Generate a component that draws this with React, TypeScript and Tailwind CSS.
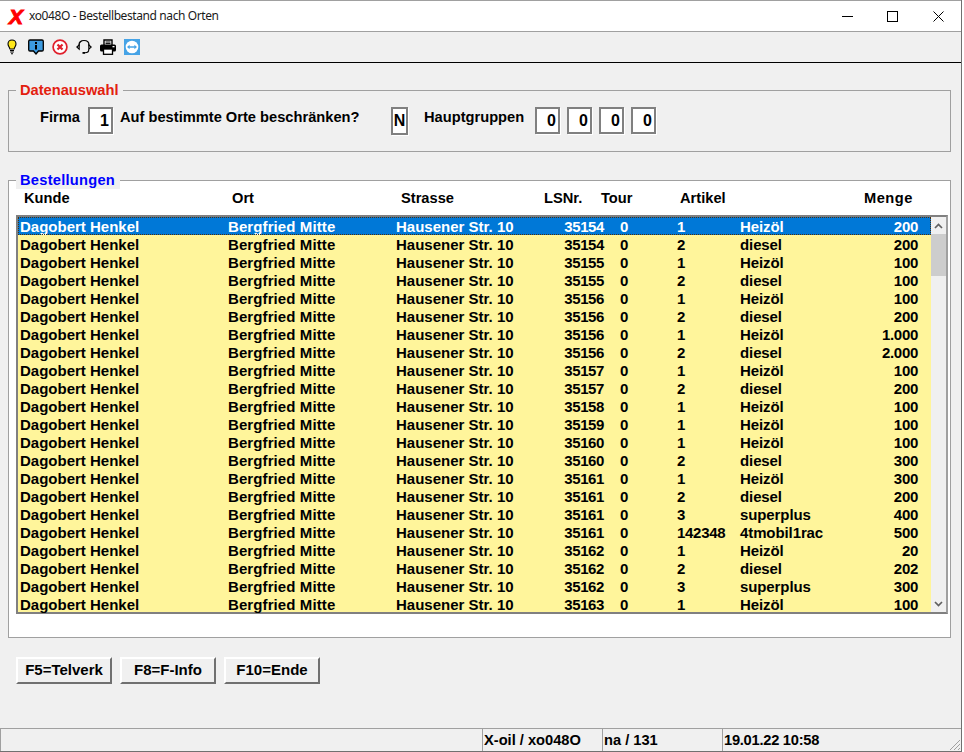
interface OrderRow {
  lsnr: string;
  pos: string;
  artikel: string;
  menge: string;
}

const rows: OrderRow[] = [
  { lsnr: '35154', pos: '1', artikel: 'Heizöl', menge: '200' },
  { lsnr: '35154', pos: '2', artikel: 'diesel', menge: '200' },
  { lsnr: '35155', pos: '1', artikel: 'Heizöl', menge: '100' },
  { lsnr: '35155', pos: '2', artikel: 'diesel', menge: '100' },
  { lsnr: '35156', pos: '1', artikel: 'Heizöl', menge: '100' },
  { lsnr: '35156', pos: '2', artikel: 'diesel', menge: '200' },
  { lsnr: '35156', pos: '1', artikel: 'Heizöl', menge: '1.000' },
  { lsnr: '35156', pos: '2', artikel: 'diesel', menge: '2.000' },
  { lsnr: '35157', pos: '1', artikel: 'Heizöl', menge: '100' },
  { lsnr: '35157', pos: '2', artikel: 'diesel', menge: '200' },
  { lsnr: '35158', pos: '1', artikel: 'Heizöl', menge: '100' },
  { lsnr: '35159', pos: '1', artikel: 'Heizöl', menge: '100' },
  { lsnr: '35160', pos: '1', artikel: 'Heizöl', menge: '100' },
  { lsnr: '35160', pos: '2', artikel: 'diesel', menge: '300' },
  { lsnr: '35161', pos: '1', artikel: 'Heizöl', menge: '300' },
  { lsnr: '35161', pos: '2', artikel: 'diesel', menge: '200' },
  { lsnr: '35161', pos: '3', artikel: 'superplus', menge: '400' },
  { lsnr: '35161', pos: '142348', artikel: '4tmobil1rac', menge: '500' },
  { lsnr: '35162', pos: '1', artikel: 'Heizöl', menge: '20' },
  { lsnr: '35162', pos: '2', artikel: 'diesel', menge: '202' },
  { lsnr: '35162', pos: '3', artikel: 'superplus', menge: '300' },
  { lsnr: '35163', pos: '1', artikel: 'Heizöl', menge: '100' },
];

function Bulb() {
  return (
    <svg width="16" height="16" viewBox="0 0 16 16">
      <path d="M8 1C5.500 1 4 2.900 4 5c0 2 1.500 3 1.900 5h4.200c.4-2 1.900-3 1.900-5 0-2.100-1.500-4-4-4z" fill="#ffe81a" stroke="#000" strokeWidth="1.100" />
      <path d="M6 11.500h4M6.200 13h3.600M7 14.700h2" stroke="#000" strokeWidth="1.100" />
    </svg>
  );
}

function InfoBubble() {
  return (
    <svg width="16" height="16" viewBox="0 0 16 16">
      <path d="M2 1h12a1.300 1.300 0 0 1 1.300 1.300v8.400A1.300 1.300 0 0 1 14 12h-3.500L8 15l-2.500-3H2a1.300 1.300 0 0 1-1.300-1.300V2.300A1.300 1.300 0 0 1 2 1z" fill="#3d9be0" stroke="#000" strokeWidth="1.300" />
      <rect x="7" y="3" width="2" height="2" fill="#000" />
      <rect x="7" y="6" width="2" height="4.500" fill="#000" />
    </svg>
  );
}

function StopCircle() {
  return (
    <svg width="16" height="16" viewBox="0 0 16 16">
      <circle cx="8" cy="8" r="6.900" fill="#fff" stroke="#e0202c" strokeWidth="1.700" />
      <path d="M5.500 5.500l5 5M10.500 5.500l-5 5" stroke="#e0202c" strokeWidth="2.200" />
    </svg>
  );
}

function Headset() {
  return (
    <svg width="16" height="16" viewBox="0 0 16 16" fill="none">
      <path d="M3 7V6C3 3.200 5.200 1.500 8 1.500S13 3.200 13 6v1" stroke="#000" strokeWidth="1.200" />
      <path d="M3.200 5.800L.8 8l2.400 2.200zM12.800 5.800L15.200 8l-2.400 2.200z" fill="#fff" stroke="#000" strokeWidth="1.100" />
      <path d="M12.800 10.500c0 2.300-1.800 3.300-3.800 3.300" stroke="#000" strokeWidth="1.100" />
      <rect x="6.500" y="13" width="2.500" height="1.800" fill="#000" />
    </svg>
  );
}

function Printer() {
  return (
    <svg width="16" height="16" viewBox="0 0 16 16">
      <path d="M4 6V1h8v5" fill="#fff" stroke="#000" strokeWidth="1.400" />
      <path d="M5.500 3h5M5.500 4.600h5" stroke="#000" />
      <rect x="0" y="5.500" width="16" height="7" rx="1.500" fill="#000" />
      <rect x="3.500" y="10" width="9" height="5.300" fill="#fff" stroke="#000" strokeWidth="1.300" />
      <rect x="12.500" y="7" width="2" height="1.300" fill="#fff" />
    </svg>
  );
}

function RemoteLogo() {
  return (
    <svg width="16" height="16" viewBox="0 0 16 16">
      <rect width="16" height="16" fill="#46a3e6" />
      <circle cx="8" cy="8" r="6.300" fill="#fff" />
      <path d="M3 8l2.600-2.300v1.500h4.800V5.700L13 8l-2.600 2.300V8.800H5.600v1.500z" fill="#46a3e6" />
    </svg>
  );
}

function Box({ value, wide = true }: { value: string; wide?: boolean }) {
  return (
    <div
      className={`flex items-center border-2 border-[#808080] bg-white text-[16px] font-bold shadow-[1px_1px_0_#ffffff] ${
        wide ? 'h-[27px] w-[25px] justify-end pr-[2px]' : 'h-[28px] w-[17px] justify-center'
      }`}
    >
      {value}
    </div>
  );
}

function FnButton({ label }: { label: string }) {
  return (
    <button className="flex h-[27px] w-[96px] items-center justify-center border-2 border-t-white border-l-white border-r-[#707070] border-b-[#707070] bg-[#f0f0f0] text-[15px] font-bold text-black">
      {label}
    </button>
  );
}

export default function App() {
  return (
    <div className="h-[752px] w-[964px] overflow-hidden bg-white font-['Liberation_Sans',Arial,sans-serif] text-black">
      <div className="flex h-full w-[962px] flex-col border-r border-[#707070] bg-[#f0f0f0]">
        {/* Title bar */}
        <div className="flex h-[32px] shrink-0 items-center border-t border-b border-t-[#a0a0a0] border-b-[#a0a0a0] bg-white">
          <span className="ml-[9px] w-[20px] text-[21px] leading-none font-bold text-[#ff0000] italic [-webkit-text-stroke:1px_#ff0000]">X</span>
          <span className="font-['Noto_Sans',sans-serif] text-[12px] tracking-[-0.4px] text-[#1a1a1a]">xo048O - Bestellbestand nach Orten</span>
          <div className="ml-auto flex items-center">
            <svg className="mr-[34px]" width="11" height="11" viewBox="0 0 11 11" stroke="#000" fill="none">
              <path d="M0 5.500h11" />
            </svg>
            <svg className="mr-[35px]" width="11" height="11" viewBox="0 0 11 11" stroke="#000" fill="none">
              <rect x="0.500" y="0.500" width="10" height="10" />
            </svg>
            <svg className="mr-[17px]" width="11" height="11" viewBox="0 0 11 11" stroke="#000" fill="none">
              <path d="M0.500 0.500l10 10M10.500 0.500l-10 10" />
            </svg>
          </div>
        </div>

        {/* Toolbar */}
        <div className="flex h-[31px] shrink-0 items-center gap-[8px] border-b border-black pl-[4px]">
          <Bulb />
          <InfoBubble />
          <StopCircle />
          <Headset />
          <Printer />
          <RemoteLogo />
        </div>

        <div className="flex flex-1 flex-col px-[8px]">
          {/* Datenauswahl */}
          <fieldset className="mt-[18px] h-[71px] w-[943px] border border-[#a0a0a0]">
            <legend className="ml-[7px] h-[18px] px-[4px] text-[14.67px] leading-[18px] font-bold text-[#e3200f]">Datenauswahl</legend>
            <div className="flex items-start pt-[8px] text-[14.67px] font-bold">
              <span className="mt-[1px] ml-[31px] w-[48px] leading-[18px]">Firma</span>
              <Box value="1" />
              <span className="mt-[1px] ml-[7px] w-[271px] leading-[18px]">Auf bestimmte Orte beschränken?</span>
              <Box value="N" wide={false} />
              <span className="mt-[1px] ml-[16px] w-[111px] leading-[18px]">Hauptgruppen</span>
              <div className="flex gap-[7px]">
                <Box value="0" />
                <Box value="0" />
                <Box value="0" />
                <Box value="0" />
              </div>
            </div>
          </fieldset>

          {/* Bestellungen */}
          <fieldset className="mt-[20px] h-[466px] w-[943px] border border-[#a0a0a0] bg-white">
            <legend className="ml-[7px] h-[17px] bg-[#f0f0f0] pr-[5px] pl-[4px] text-[14.67px] leading-[17px] font-bold tracking-[0.25px] text-[#0000ff]">Bestellungen</legend>
            <div className="flex h-[26px] items-center pb-[9px] text-[14.67px] font-bold">
              <span className="ml-[15px] w-[208px]">Kunde</span>
              <span className="w-[169px]">Ort</span>
              <span className="w-[143px]">Strasse</span>
              <span className="w-[57px]">LSNr.</span>
              <span className="w-[79px]">Tour</span>
              <span className="w-[184px]">Artikel</span>
              <span className="tracking-[0.5px]">Menge</span>
            </div>
            <div className="ml-[7px] flex h-[399px] w-[932px] border-2 border-t-[#808080] border-l-[#808080] border-r-[#a0a0a0] border-b-[#808080]">
              <div className="w-[913px] bg-[#fff59b] text-[15px] font-bold">
                {rows.map((row, index) => (
                  <div
                    key={index}
                    className={`flex h-[18px] items-center pt-[2px] leading-[18px] whitespace-nowrap ${
                      index === 0 ? 'bg-[#0078d7] text-white outline-1 -outline-offset-1 outline-dotted outline-[#4a3010]' : ''
                    }`}
                  >
                    <span className="ml-[2px] w-[208px]">Dagobert Henkel</span>
                    <span className="w-[168px] tracking-[0.1px]">Bergfried Mitte</span>
                    <span className="w-[136px]">Hausener Str. 10</span>
                    <span className="w-[72px] text-right tracking-[-0.4px]">{row.lsnr}</span>
                    <span className="ml-[16px] w-[57px]">0</span>
                    <span className="w-[63px] tracking-[-0.3px]">{row.pos}</span>
                    <span className="w-[110px] tracking-[-0.1px]">{row.artikel}</span>
                    <span className="w-[68px] text-right tracking-[-0.3px]">{row.menge}</span>
                  </div>
                ))}
              </div>
              {/* Scrollbar */}
              <div className="flex flex-1 flex-col bg-[#f0f0f0]">
                <div className="flex h-[17px] items-center justify-center">
                  <svg width="9" height="6" viewBox="0 0 9 6" fill="none">
                    <path d="M1 5l3.500-3.500L8 5" stroke="#606060" strokeWidth="1.700" />
                  </svg>
                </div>
                <div className="h-[42px] bg-[#cdcdcd]" />
                <div className="flex-1" />
                <div className="flex h-[17px] items-center justify-center">
                  <svg width="9" height="6" viewBox="0 0 9 6" fill="none">
                    <path d="M1 1l3.500 3.500L8 1" stroke="#606060" strokeWidth="1.700" />
                  </svg>
                </div>
              </div>
            </div>
          </fieldset>

          {/* Function keys */}
          <div className="mt-[19px] ml-[8px] flex gap-[8px]">
            <FnButton label="F5=Telverk" />
            <FnButton label="F8=F-Info" />
            <FnButton label="F10=Ende" />
          </div>
        </div>

        {/* Status bar */}
        <div className="flex h-[24px] shrink-0 items-stretch gap-[3px] border-t border-b border-t-[#a0a0a0] border-b-[#707070] text-[14.67px] font-bold">
          <div className="w-[479px] border-l border-[#a0a0a0]" />
          <div className="flex w-[117px] items-center border-l border-[#a0a0a0] pl-[1px]">X-oil / xo048O</div>
          <div className="flex w-[117px] items-center border-l border-[#a0a0a0] pl-[1px]">na / 131</div>
          <div className="relative flex flex-1 items-center border-l border-[#a0a0a0] pl-[1px] tracking-[-0.25px]">
            19.01.22 10:58
            <svg className="absolute right-0 bottom-0" width="13" height="13" viewBox="0 0 13 13" stroke="#a0a0a0">
              <path d="M12 2L2 12M12 6L6 12M12 10l-2 2" />
            </svg>
          </div>
        </div>
      </div>
    </div>
  );
}
